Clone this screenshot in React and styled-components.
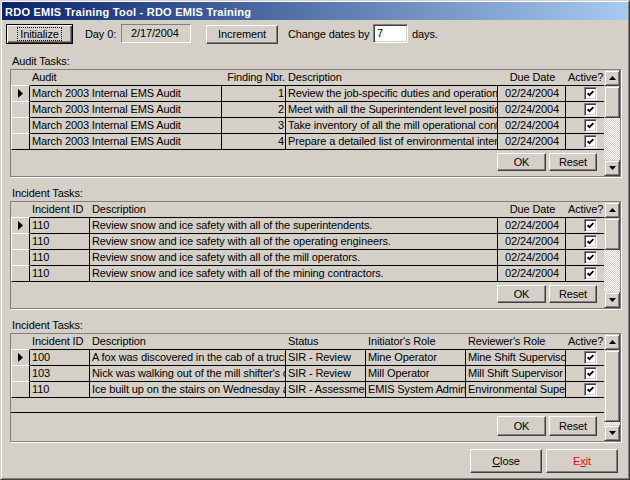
import React from 'react';
import styled, { createGlobalStyle } from 'styled-components';

const Global = createGlobalStyle`
  html, body { margin: 0; padding: 0; background: #D4D0C8; }
  body { font-family: "Liberation Sans", Arial, sans-serif; font-size: 11px; color: #000; }
  * { box-sizing: border-box; }
`;

const Window = styled.div`
  width: 630px;
  height: 480px;
  background: #D4D0C8;
  border: 1px solid;
  border-color: #D4D0C8 #404040 #404040 #D4D0C8;
  display: flex;
  flex-direction: column;
`;

const WindowInner = styled.div`
  flex: 1;
  display: flex;
  flex-direction: column;
  border: 1px solid;
  border-color: #fff #808080 #808080 #fff;
`;

const TitleBar = styled.div`
  height: 18px;
  line-height: 20px;
  overflow: hidden;
  padding-left: 3px;
  background: linear-gradient(to right, #0A246A, #A6CAF0);
  color: #fff;
  font-weight: bold;
  font-size: 11px;
  letter-spacing: 0.25px;
  white-space: nowrap;
`;

const Content = styled.div`
  flex: 1;
  display: flex;
  flex-direction: column;
  padding: 0 2px;
  letter-spacing: -0.12px;
`;

const Toolbar = styled.div`
  margin-top: 4px;
  height: 20px;
  display: flex;
  align-items: flex-start;
`;

const Label = styled.div`
  margin-left: ${p => p.$ml || 0}px;
  width: ${p => (p.$w ? `${p.$w}px` : 'auto')};
  line-height: 20px;
  white-space: nowrap;
`;

const DateBox = styled.div`
  width: 70px;
  height: 19px;
  border: 1px solid;
  border-color: #808080 #fff #fff #808080;
  padding-left: 9px;
  line-height: 17px;
`;

const NumInput = styled.div`
  width: 35px;
  height: 19px;
  background: #fff;
  border: 1px solid;
  border-color: #808080 #fff #fff #808080;
  box-shadow: inset 1px 1px #404040, inset -1px -1px #D4D0C8;
  padding-left: 3px;
  line-height: 17px;
`;

const Button = styled.button`
  font: inherit;
  letter-spacing: inherit;
  color: ${p => p.$color || '#000'};
  margin: ${p => (p.$mt || 0)}px 0 0 ${p => p.$ml || 0}px;
  width: ${p => p.$w}px;
  height: ${p => p.$h}px;
  padding: 0;
  background: #D4D0C8;
  border: 1px solid;
  border-color: #fff #404040 #404040 #fff;
  box-shadow: inset -1px -1px #808080, inset 1px 1px #D4D0C8;
  display: flex;
  align-items: center;
  justify-content: center;
  line-height: 13px;
`;

const DefaultButton = styled(Button)`
  border: 1px solid #000;
  box-shadow: inset 1px 1px #fff, inset -1px -1px #404040, inset -2px -2px #808080;
`;

const Focus = styled.span`
  border: 1px dotted #000;
  padding: 0 2px;
  line-height: 12px;
`;

const SectionLabel = styled.div`
  margin-top: ${p => p.$mt}px;
  margin-bottom: 1px;
  height: 14px;
  line-height: 14px;
  padding-left: 8px;
`;

const Frame = styled.div`
  margin-left: 6px;
  width: 611px;
  height: ${p => p.$h}px;
  border: 1px solid #808080;
  box-shadow: 1px 1px 0 #fff;
  display: flex;
  flex-shrink: 0;
`;

const GridMain = styled.div`
  width: 593px;
  display: flex;
  flex-direction: column;
`;

const HeadRow = styled.div`
  display: grid;
  grid-template-columns: ${p => p.$cols};
  height: 15px;
`;

const HeadCell = styled.div`
  padding: 0 1px 0 2px;
  line-height: 15px;
  text-align: ${p => p.$align || 'left'};
  white-space: nowrap;
  overflow: hidden;
`;

const DataRow = styled.div`
  display: grid;
  grid-template-columns: ${p => p.$cols};
  height: ${p => (p.$last ? 17 : 16)}px;
`;

const Cell = styled.div`
  border-top: 1px solid #000;
  border-right: ${p => (p.$end ? '0' : '1px solid #000')};
  border-bottom: ${p => (p.$last ? '1px solid #000' : '0')};
  padding: 0 1px 0 2px;
  line-height: 15px;
  white-space: nowrap;
  overflow: hidden;
  text-align: ${p => p.$align || 'left'};
`;

const CheckCell = styled(Cell)`
  display: flex;
  align-items: center;
  justify-content: center;
  padding: 0 0 0 10px;
`;

const Indicator = styled.div`
  border-top: 1px solid #fff;
  border-left: 1px solid #fff;
  border-right: 1px solid #000;
  border-bottom: ${p => (p.$last ? '1px solid #000' : '0')};
  display: flex;
  align-items: center;
  padding-left: 6px;
`;

const NewRowBand = styled.div`
  height: 15px;
  border-bottom: 1px solid #000;
`;

const Filler = styled.div`
  flex: 1;
  display: flex;
  justify-content: flex-end;
  align-items: flex-start;
  padding: 3px 7px 0 0;
  gap: 3px;
`;

const CheckBox = styled.span`
  width: 13px;
  height: 13px;
  background: #fff;
  border: 1px solid;
  border-color: #808080 #fff #fff #808080;
  box-shadow: inset 1px 1px #404040, inset -1px -1px #D4D0C8;
  display: flex;
  align-items: center;
  justify-content: center;
`;

const ScrollBar = styled.div`
  width: 16px;
  display: flex;
  flex-direction: column;
`;

const Raised = styled.div`
  flex-shrink: 0;
  height: ${p => p.$h}px;
  background: #D4D0C8;
  border: 1px solid;
  border-color: #D4D0C8 #404040 #404040 #D4D0C8;
  box-shadow: inset 1px 1px #fff, inset -1px -1px #808080;
  display: flex;
  align-items: center;
  justify-content: center;
`;

const Track = styled.div`
  flex: 1;
  background-color: #fff;
  background-image: conic-gradient(#D4D0C8 25%, #fff 0 50%, #D4D0C8 0 75%, #fff 0);
  background-size: 2px 2px;
`;

const Footer = styled.div`
  margin-top: 7px;
  display: flex;
  justify-content: flex-end;
  padding-right: 8px;
  gap: 4px;
`;

const Arrow = ({ dir }) => (
  <svg width="7" height="4" viewBox="0 0 7 4" style={{ display: 'block' }}>
    {dir === 'up' ? <polygon points="3.5,0 7,4 0,4" fill="#000" /> : <polygon points="0,0 7,0 3.5,4" fill="#000" />}
  </svg>
);

const RowArrow = () => (
  <svg width="5" height="9" viewBox="0 0 5 9" style={{ display: 'block' }}>
    <polygon points="0,0 5,4.5 0,9" fill="#000" />
  </svg>
);

const Check = () => (
  <CheckBox>
    <svg width="7" height="7" viewBox="0 0 7 7" style={{ display: 'block' }}>
      <polyline points="0.6,3.2 2.5,5.2 6.4,1.1" fill="none" stroke="#000" strokeWidth="1.8" />
    </svg>
  </CheckBox>
);

function Grid({ cols, columns, rows, height, thumb, btnH, band }) {
  const tpl = cols.map(c => `${c}px`).join(' ');
  return (
    <Frame $h={height}>
      <GridMain>
        <HeadRow $cols={tpl}>
          <div />
          {columns.map((c, i) => (
            <HeadCell key={i} $align={c.halign}>{c.title}</HeadCell>
          ))}
        </HeadRow>
        {rows.map((r, ri) => {
          const last = ri === rows.length - 1;
          return (
            <DataRow key={ri} $cols={tpl} $last={last}>
              <Indicator $last={last}>{ri === 0 && <RowArrow />}</Indicator>
              {columns.map((c, ci) =>
                c.check ? (
                  <CheckCell key={ci} $end $last={last}><Check /></CheckCell>
                ) : (
                  <Cell key={ci} $align={c.align} $last={last} $end={ci === columns.length - 1}>{r[ci]}</Cell>
                )
              )}
            </DataRow>
          );
        })}
        {band && <NewRowBand />}
        <Filler>
          <Button $w={49} $h={btnH}>OK</Button>
          <Button $w={48} $h={btnH}>Reset</Button>
        </Filler>
      </GridMain>
      <ScrollBar>
        <Raised $h={16}><Arrow dir="up" /></Raised>
        <Raised $h={thumb} />
        <Track />
        <Raised $h={16}><Arrow dir="down" /></Raised>
      </ScrollBar>
    </Frame>
  );
}

const auditCols = [
  { title: 'Audit' },
  { title: 'Finding Nbr.', halign: 'right', align: 'right' },
  { title: 'Description' },
  { title: 'Due Date', halign: 'center', align: 'center' },
  { title: 'Active?', halign: 'center', check: true },
];
const auditRows = [
  ['March 2003 Internal EMS Audit', '1', 'Review the job-specific duties and operations of each position.', '02/24/2004'],
  ['March 2003 Internal EMS Audit', '2', 'Meet with all the Superintendent level positions to review duties.', '02/24/2004'],
  ['March 2003 Internal EMS Audit', '3', 'Take inventory of all the mill operational controls and procedures.', '02/24/2004'],
  ['March 2003 Internal EMS Audit', '4', 'Prepare a detailed list of environmental interactions for each area.', '02/24/2004'],
];

const inc1Cols = [
  { title: 'Incident ID' },
  { title: 'Description' },
  { title: 'Due Date', halign: 'center', align: 'center' },
  { title: 'Active?', halign: 'center', check: true },
];
const inc1Rows = [
  ['110', 'Review snow and ice safety with all of the superintendents.', '02/24/2004'],
  ['110', 'Review snow and ice safety with all of the operating engineers.', '02/24/2004'],
  ['110', 'Review snow and ice safety with all of the mill operators.', '02/24/2004'],
  ['110', 'Review snow and ice safety with all of the mining contractors.', '02/24/2004'],
];

const inc2Cols = [
  { title: 'Incident ID' },
  { title: 'Description' },
  { title: 'Status' },
  { title: "Initiator's Role" },
  { title: "Reviewer's Role" },
  { title: 'Active?', halign: 'center', check: true },
];
const inc2Rows = [
  ['100', 'A fox was discovered in the cab of a truck parked at the mine.', 'SIR - Review', 'Mine Operator', 'Mine Shift Supervisor'],
  ['103', "Nick was walking out of the mill shifter's office when he slipped.", 'SIR - Review', 'Mill Operator', 'Mill Shift Supervisor'],
  ['110', 'Ice built up on the stairs on Wednesday and Thursday mornings.', 'SIR - Assessment', 'EMIS System Administrator', 'Environmental Superintendent'],
];

export default function App() {
  return (
    <>
      <Global />
      <Window>
        <WindowInner>
          <TitleBar>RDO EMIS Training Tool - RDO EMIS Training</TitleBar>
          <Content>
            <Toolbar>
              <DefaultButton $ml={2} $w={67} $h={20}><Focus>Initialize</Focus></DefaultButton>
              <Label $ml={12} $w={36}>Day 0:</Label>
              <DateBox>2/17/2004</DateBox>
              <Button $ml={15} $w={72} $h={19} $mt={1}>Increment</Button>
              <Label $ml={10} $w={85}>Change dates by</Label>
              <NumInput>7</NumInput>
              <Label $ml={4}>days.</Label>
            </Toolbar>

            <SectionLabel $mt={10}>Audit Tasks:</SectionLabel>
            <Grid cols={[19, 192, 64, 212, 68, 38]} columns={auditCols} rows={auditRows} height={108} thumb={32} btnH={18} />

            <SectionLabel $mt={9}>Incident Tasks:</SectionLabel>
            <Grid cols={[19, 60, 408, 68, 38]} columns={inc1Cols} rows={inc1Rows} height={108} thumb={32} btnH={18} />

            <SectionLabel $mt={9}>Incident Tasks:</SectionLabel>
            <Grid cols={[19, 60, 196, 80, 100, 100, 38]} columns={inc2Cols} rows={inc2Rows} height={109} thumb={72} btnH={20} band />

            <Footer>
              <Button $w={72} $h={24}><span><u>C</u>lose</span></Button>
              <Button $w={72} $h={24} $color="#FF0000"><span>E<u>x</u>it</span></Button>
            </Footer>
          </Content>
        </WindowInner>
      </Window>
    </>
  );
}
